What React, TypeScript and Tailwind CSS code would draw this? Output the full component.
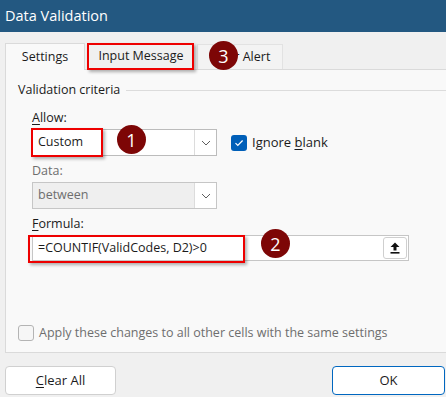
import React from "react";

const Chevron = () => (
  <svg width="10" height="6" viewBox="0 0 10 6" fill="none">
    <path d="M1 1l4 4 4-4" stroke="#5f5f5f" strokeWidth="1" />
  </svg>
);

const Badge = ({ n, className }: { n: string; className: string }) => (
  <div
    className={
      "absolute w-[29px] h-[29px] rounded-full bg-[#7d0606] text-white text-[18px] leading-none flex items-center justify-center font-['Open_Sans',sans-serif] " +
      className
    }
  >
    {n}
  </div>
);

export default function App() {
  return (
    <div className="relative w-[446px] h-[397px] overflow-hidden bg-[#f0f0f0] text-[12.5px] text-[#1b1b1b] font-['Segoe_UI','Open_Sans',sans-serif]">
      {/* title bar */}
      <div className="h-[32px] bg-[#235881] text-white text-[14.5px] pl-[5px] flex items-center">
        Data Validation
      </div>

      {/* tabs */}
      <div className="relative z-10 flex items-end h-[37px] pl-[5px]">
        <div className="w-[80px] h-[27px] -mb-px bg-[#f9f9f9] border border-b-0 border-[#dadada] flex items-center justify-center">
          Settings
        </div>
        <div className="w-[112px] h-[26px] flex items-center justify-center">Input Message</div>
        <div className="w-[86px] h-[25px] bg-[#f3f3f3] border border-b-0 border-[#e2e2e2] flex items-center justify-center">
          Error Alert
        </div>
      </div>

      {/* panel */}
      <div className="ml-[5px] w-[445px] h-[284px] border border-[#dadada] bg-[#f9f9f9] pl-[12px] pt-[12px] flex flex-col">
        <div className="flex items-center h-[16px] gap-[6px]">
          <span>Validation criteria</span>
          <div className="flex-1 h-px bg-[#dcdcdc]" />
        </div>

        <div className="ml-[14px] flex flex-col">
          <div className="mt-[12px] h-[16px] leading-[16px]">
            <u className="underline-offset-2">A</u>llow:
          </div>
          <div className="mt-[3px] flex items-center">
            <div className="w-[185px] h-[27px] border border-[#bcbcbc] bg-white flex">
              <div className="flex-1 pl-[5px] flex items-center">Custom</div>
              <div className="w-[22px] border-l border-[#dcdcdc] flex items-center justify-center">
                <Chevron />
              </div>
            </div>
            <div className="ml-[14px] w-[16px] h-[16px] rounded-[3px] bg-[#005fb8] flex items-center justify-center">
              <svg width="10" height="8" viewBox="0 0 10 8" fill="none">
                <path d="M1.5 4.2l2.3 2.3L8.6 1.5" stroke="white" strokeWidth="1.2" />
              </svg>
            </div>
            <div className="ml-[5px] text-[13px]">
              Ignore <u className="underline-offset-2">b</u>lank
            </div>
          </div>

          <div className="mt-[7px] h-[16px] leading-[16px] text-[#6e6e6e]">Data:</div>
          <div className="mt-[3px] w-[185px] h-[27px] border border-[#c6c6c6] bg-[#efefef] flex">
            <div className="flex-1 pl-[5px] flex items-center text-[#6e6e6e]">between</div>
            <div className="w-[22px] border-l border-[#dcdcdc] bg-white flex items-center justify-center">
              <Chevron />
            </div>
          </div>

          <div className="mt-[7px] h-[16px] leading-[16px]">
            <u className="underline-offset-2">F</u>ormula:
          </div>
          <div className="mt-[3px] w-[377px] h-[26px] border border-[#c6c6c6] bg-white flex items-center">
            <div className="flex-1 pl-[5px]">=COUNTIF(ValidCodes, D2)&gt;0</div>
            <div className="mr-px w-[24px] h-[22px] rounded-[3px] border border-[#cfcfcf] bg-white flex items-center justify-center">
              <svg width="10" height="12" viewBox="0 0 10 12">
                <path d="M5 0.5L9.5 5H6.5V8.5H3.5V5H0.5Z" fill="#111" />
                <rect x="0.5" y="10" width="9" height="1.6" fill="#111" />
              </svg>
            </div>
          </div>
        </div>

        <div className="mt-[64px] flex items-center h-[16px]">
          <div className="w-[16px] h-[16px] rounded-[3px] border border-[#b4b4b4] bg-[#f6f6f6]" />
          <span className="ml-[5px] text-[#6e6e6e]">Apply these changes to all other cells with the same settings</span>
        </div>
      </div>

      {/* buttons */}
      <div className="mt-[13px] flex justify-between pl-[5px] pr-px">
        <button className="w-[111px] h-[29px] rounded-[4px] border border-[#d0d0d0] bg-white text-[13px]">
          <u className="underline-offset-2">C</u>lear All
        </button>
        <button className="w-[113px] h-[29px] rounded-[4px] border border-[#0067c0] bg-white text-[13px]">
          OK
        </button>
      </div>

      {/* annotations */}
      <div className="absolute z-20 left-[87px] top-[43px] w-[107px] h-[27px] border-2 border-[#ee0000] shadow-[2px_2px_3px_rgba(0,0,0,0.3)]" />
      <div className="absolute z-20 left-[31px] top-[128px] w-[72px] h-[29px] border-2 border-[#ee0000] shadow-[2px_2px_3px_rgba(0,0,0,0.3)]" />
      <div className="absolute z-20 left-[28px] top-[235px] w-[217px] h-[28px] border-2 border-[#ee0000] shadow-[2px_2px_3px_rgba(0,0,0,0.3)]" />
      <Badge n="3" className="z-20 left-[209px] top-[41px]" />
      <Badge n="1" className="z-20 left-[117px] top-[125px]" />
      <Badge n="2" className="z-20 left-[261px] top-[229px]" />
    </div>
  );
}
